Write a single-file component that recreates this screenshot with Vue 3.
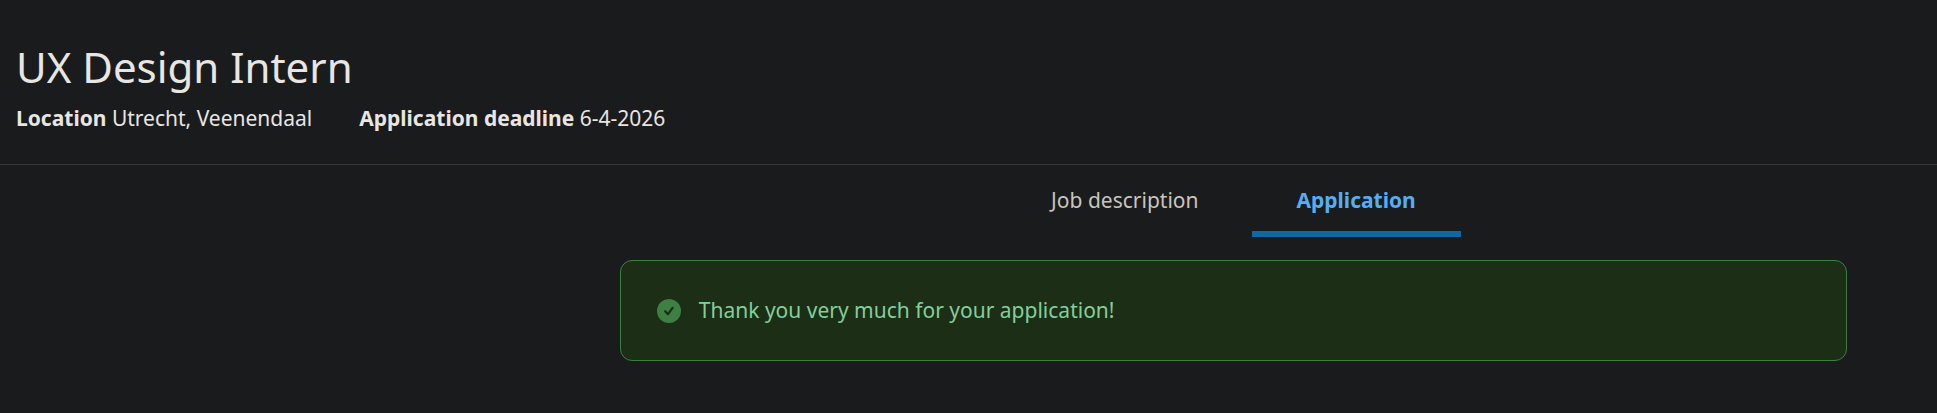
<script setup>
import { ref } from 'vue'

const details = [
  { label: 'Location', value: 'Utrecht, Veenendaal' },
  { label: 'Application deadline', value: '6-4-2026' },
]
const tabs = ['Job description', 'Application']
const active = ref('Application')
</script>

<template>
  <div class="page">
    <header class="header">
      <h1 class="title">UX Design Intern</h1>
      <div class="details">
        <span v-for="d in details" :key="d.label"><strong>{{ d.label }}</strong> {{ d.value }}</span>
      </div>
    </header>
    <main class="content">
      <nav class="tabs">
        <a
          v-for="t in tabs"
          :key="t"
          href="#"
          class="tab"
          :class="{ active: t === active }"
          @click.prevent="active = t"
        >{{ t }}</a>
      </nav>
      <div class="alert" role="status">
        <svg class="icon" viewBox="0 0 24 24" aria-hidden="true">
          <circle cx="12" cy="12" r="12" fill="#3e7f43" />
          <path d="M8.2 12.2 L11 15.2 L15.6 8.8" fill="none" stroke="#1c2e15" stroke-width="2.2" stroke-linecap="round" stroke-linejoin="round" />
        </svg>
        <span>Thank you very much for your application!</span>
      </div>
    </main>
  </div>
</template>

<style>
body {
  background: #1a1b1d;
}
</style>

<style scoped>
.page {
  color: #e8e6e3;
  font-family: "Noto Sans", "Open Sans", sans-serif;
  font-size: 21px;
  line-height: 32px;
}
.header {
  padding: 39px 16px 30px;
  border-bottom: 1px solid #36393b;
}
.title {
  margin: 0;
  font-size: 42px;
  font-weight: 400;
  line-height: 56px;
}
.details {
  display: flex;
  gap: 47px;
  margin-top: 7px;
}
.content {
  margin-left: 32%;
  padding-right: 90px;
}
.tabs {
  display: flex;
  justify-content: center;
  gap: 8px;
}
.tab {
  padding: 19px 45px 15px;
  border-bottom: 6px solid transparent;
  color: #c9c5be;
  text-decoration: none;
}
.tab.active {
  border-bottom-color: #1068a3;
  color: #55aef5;
  font-weight: 700;
}
.alert {
  display: flex;
  align-items: center;
  gap: 18px;
  margin-top: 23px;
  padding: 33px 36px 34px;
  border: 1px solid #3c8040;
  border-radius: 12px;
  background: #1c2e15;
  color: #83cf9b;
}
.icon {
  width: 24px;
  height: 24px;
  margin-top: 2px;
}
</style>
